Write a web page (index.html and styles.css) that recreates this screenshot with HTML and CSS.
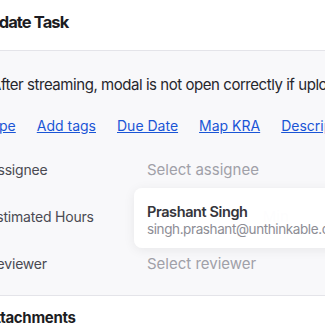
FILE: index.html
```html
<!DOCTYPE html>
<html lang="en">
<head>
    <meta charset="UTF-8">
    <meta name="viewport" content="width=device-width, initial-scale=1.0">
    <title>Update Task</title>
    <link rel="stylesheet" href="styles.css">
</head>
<body>
    <div class="modal">
        <div class="modal-header">
            <h2>Update Task</h2>
        </div>
        <div class="modal-body">
            <p class="task-name">After streaming, modal is not open correctly if uploading</p>
            <div class="links">
                <a href="#">Type</a>
                <a href="#">Add tags</a>
                <a href="#">Due Date</a>
                <a href="#">Map KRA</a>
                <a href="#">Description</a>
            </div>
            <div class="fields">
                <div class="field">
                    <span class="label">Assignee</span>
                    <span class="value">Select assignee</span>
                </div>
                <div class="field">
                    <span class="label">Estimated Hours</span>
                    <span class="value hours"><span>Hr</span><span>Min</span></span>
                </div>
                <div class="field">
                    <span class="label">Reviewer</span>
                    <span class="value">Select reviewer</span>
                </div>
                <div class="dropdown">
                    <div class="option">
                        <div class="name">Prashant Singh</div>
                        <div class="email">singh.prashant@unthinkable.co</div>
                    </div>
                </div>
            </div>
        </div>
        <div class="modal-section">
            <h3>Attachments</h3>
        </div>
    </div>
</body>
</html>
```

FILE: styles.css
```css
body {
    margin: 0;
    font-family: Inter, "Noto Sans", sans-serif;
    background: white;
    overflow: hidden;
}
.modal {
    margin-left: -30px;
    width: 440px;
}
.modal-header {
    height: 44px;
    padding-bottom: 6px;
    border-bottom: 1px solid #e4e4e9;
    padding-left: 8px;
    display: flex;
    align-items: center;
}
.modal-header h2 {
    margin: 0;
    font-size: 16.5px;
    font-weight: 700;
    letter-spacing: -0.9px;
    color: #1c1c22;
}
.modal-body {
    background: #f8f8fa;
    padding: 22px 0 8px 21px;
    border-bottom: 1px solid #e4e4e9;
}
.task-name {
    margin: 0;
    font-size: 15px;
    letter-spacing: -0.45px;
    color: #26262c;
    line-height: 24px;
}
.links {
    display: flex;
    gap: 21px;
    margin: 19px 0 0 -8px;
    font-size: 14px;
    line-height: 20px;
}
.links a {
    color: #1a55d6;
}
.fields {
    position: relative;
    margin-top: 10px;
}
.field {
    display: grid;
    grid-template-columns: 156px 1fr;
    height: 47px;
    align-items: center;
    font-size: 15px;
}
.label {
    margin-left: -3px;
    font-size: 14px;
    letter-spacing: -0.2px;
    color: #4a4a52;
}
.value {
    color: #a0a0a8;
}
.hours {
    display: flex;
    gap: 96px;
    padding-left: 3px;
    color: #e4e4e8;
}
.dropdown {
    position: absolute;
    left: 143px;
    top: 42px;
    width: 240px;
    background: rgba(255, 255, 255, 0.92);
    border-radius: 8px;
    box-shadow: 0 2px 12px rgba(0, 0, 0, 0.07);
}
.option {
    padding: 15px 13px 11px;
}
.name {
    font-size: 14.5px;
    font-weight: 600;
    letter-spacing: -0.4px;
    color: #35353b;
    line-height: 18px;
}
.email {
    font-size: 13.5px;
    letter-spacing: -0.4px;
    color: #8d8d95;
    line-height: 16px;
}
.modal-section {
    padding: 12px 0 0 15px;
}
.modal-section h3 {
    margin: 0;
    font-size: 15px;
    font-weight: 700;
    letter-spacing: -0.3px;
    color: #1c1c22;
}
```
